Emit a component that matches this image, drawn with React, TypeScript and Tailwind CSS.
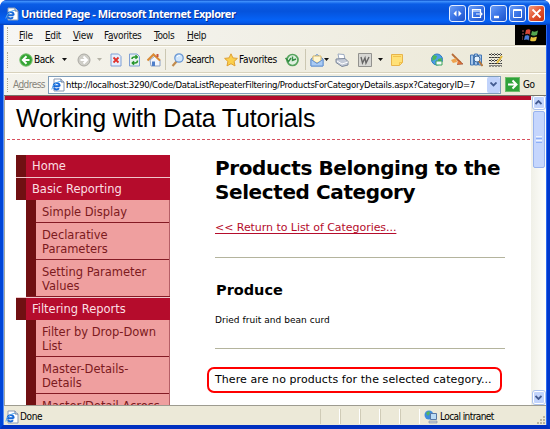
import React from "react";

const tahoma = "font-['DejaVu_Sans_Condensed','DejaVu_Sans',sans-serif] [font-stretch:condensed]";
const verdana = "font-['DejaVu_Sans',sans-serif] [font-stretch:normal]";

function Grip({ h = "h-4" }: { h?: string }) {
  return <span className={`ml-[3px] w-0 shrink-0 border-l border-dotted border-[#a9a691] ${h}`} />;
}

function Caret({ className = "", color = "#111" }: { className?: string; color?: string }) {
  return (
    <svg className={`h-[3px] w-[5px] shrink-0 ${className}`} viewBox="0 0 5 3" fill={color}>
      <path d="M0 0h5L2.5 3z" />
    </svg>
  );
}

function Svg({ className = "", w = 14, children }: { className?: string; w?: number; children: React.ReactNode }) {
  return (
    <svg width={w} height={14} viewBox={`0 0 ${w} 14`} className={`shrink-0 ${className}`} fill="none">
      {children}
    </svg>
  );
}

function IePage({ className = "" }: { className?: string }) {
  return (
    <Svg className={className}>
      <path d="M3 1h7l3 3v9H3z" fill="#fff" stroke="#8b9bb4" />
      <path d="M10 1v3h3" fill="#dbe5f3" stroke="#6b7c98" />
      <path d="M8.7 8.2H2.6a2.7 2.7 0 1 1 6.1 0M3 10a3 3 0 0 0 5 .3" stroke="#1768d8" strokeWidth="1.9" />
      <path d="M.8 11.5C2 7 5 4 9.8 3.3" stroke="#55a7ee" />
    </Svg>
  );
}

function CaptionButton({ className = "", red = false, children }: { className?: string; red?: boolean; children: React.ReactNode }) {
  return (
    <span
      className={`flex h-[17px] w-[17px] shrink-0 items-center justify-center rounded-[3px] border border-[#e4edff] bg-linear-to-br ${red ? "from-[#f19a7c] via-[#e2532f] to-[#c8300c]" : "from-[#6a9cf5] via-[#3a74e6] to-[#1d51c9]"} ${className}`}
    >
      <svg width="13" height="13" viewBox="0 0 13 13" fill="none" stroke="#fff">
        {children}
      </svg>
    </span>
  );
}

function TitleBar() {
  return (
    <div className="flex h-[25px] shrink-0 items-center rounded-t-[6px] bg-[linear-gradient(#0a4cc8_0,#3b8dfa_6%,#0a5de6_16%,#0553dc_45%,#0562f6_80%,#0558e8_92%,#0340b8_100%)] pt-[2px] pl-[5px]">
      <IePage />
      <span className="ml-[2px] w-[216px] font-['Noto_Sans',sans-serif] text-[11px] leading-[16px] font-bold tracking-[-0.46px] whitespace-nowrap text-white [font-stretch:normal] [text-shadow:1px_1px_#0a2c8c]">
        Untitled Page - Microsoft Internet Explorer
      </span>
      <CaptionButton className="ml-auto">
        <path d="M5.5 3.5v6l-3-3zM7.5 3.5v6l3-3z" fill="#fff" stroke="none" />
      </CaptionButton>
      <CaptionButton className="ml-[2px]">
        <path d="M10.5 5V2.5h-8v8h8V9M2.5 4h8M6 7h6M10 5l2 2-2 2" strokeWidth="1.2" />
      </CaptionButton>
      <CaptionButton className="ml-[5px]">
        <path d="M2 10h5" strokeWidth="2.4" />
      </CaptionButton>
      <CaptionButton className="ml-[2px]">
        <path d="M2.5 10.5v-8h8v8zM2.5 3.5h8" />
      </CaptionButton>
      <CaptionButton className="mr-[5px] ml-[2px]" red>
        <path d="M2.5 2.5l8 8M10.5 2.5l-8 8" strokeWidth="1.8" />
      </CaptionButton>
    </div>
  );
}

const menus: [string, string, string, string][] = [
  ["", "F", "ile", "w-[26px]"],
  ["", "E", "dit", "w-[28px]"],
  ["", "V", "iew", "w-[31px]"],
  ["F", "a", "vorites", "w-[50px]"],
  ["", "T", "ools", "w-[33px]"],
  ["", "H", "elp", "w-[30px]"],
];

function MenuBar() {
  return (
    <div className="flex h-[21px] shrink-0 items-stretch border-b border-[#d8d2bd] bg-linear-to-r from-[#f6f6f4] to-[#ece9d8]">
      <div className="flex flex-1 items-center">
        <Grip />
        <div className="ml-[11px] flex pt-px text-[10px] leading-[14px] tracking-[-0.35px] text-[#111]">
          {menus.map(([a, u, b, w]) => (
            <span key={u + b} className={`whitespace-nowrap ${w}`}>
              {a}
              <u className="underline-offset-1">{u}</u>
              {b}
            </span>
          ))}
        </div>
      </div>
      <div className="flex w-[31px] items-center justify-center bg-black">
        <svg width="17" height="15" viewBox="0 0 17 15">
          <path d="M4 2q3-1.600 5 .5L8 7Q6 5 3 6.500z" fill="#d64738" />
          <path d="M10 3q3 1.500 6-.5L15 7q-3 1.600-6 0z" fill="#53a64f" />
          <path d="M3 7.500Q6 6 8 8l-1 4.500Q5 11 2 12z" fill="#4979d4" />
          <path d="M9 8.500q3 1.500 6 0L14 12.500q-3 1.700-6 0z" fill="#e7c33e" />
          <path d="M0 3h2M0 6h2M0 9h1M0 11h1" stroke="#a55" />
          <path d="M9 2L7 13M3 7q3-1 5 1t7 0" stroke="#111" fill="none" />
        </svg>
      </div>
    </div>
  );
}

function Toolbar() {
  return (
    <div className="flex h-[27px] shrink-0 items-center border-t border-b border-t-[#fffef8] border-b-[#d8d2bd] bg-linear-to-r from-[#f4f3ec] to-[#ece9d8] text-[10px]">
      <Grip />
      <Svg className="ml-[11px]">
        <circle cx="7" cy="7" r="6.200" fill="#35a535" stroke="#73bf6a" />
        <path d="M7.500 3.200L3.800 7l3.700 3.800M4 7h6.500" stroke="#fff" strokeWidth="2" />
      </Svg>
      <span className="ml-px w-[28px] tracking-[-0.5px]">Back</span>
      <Caret />
      <Svg className="ml-[10px]">
        <circle cx="7" cy="7" r="6" fill="#cfcec8" stroke="#aaa9a3" />
        <path d="M6.500 3.500L10 7l-3.500 3.500M10 7H3.500" stroke="#fff" strokeWidth="2" />
      </Svg>
      <Caret className="ml-[6px]" color="#b5b3a7" />
      <Svg className="ml-[7px]">
        <path d="M2 1h7.500L12 3.500V13H2z" fill="#e6effd" stroke="#7f9fd4" />
        <path d="M4.500 4.500l5 5M9.500 4.500l-5 5" stroke="#e0302a" strokeWidth="1.800" />
      </Svg>
      <Svg className="ml-[5px]">
        <path d="M1.500 1H9l2.500 2.500V13h-10z" fill="#e6f3ee" stroke="#7f9fd4" />
        <path d="M4 6q0-2 2.500-2H9M7.500 2.300L9.300 4 7.500 5.700M9.500 7.500q0 2.500-2.500 2.500H4.500M6 8.300L4.300 10 6 11.700" stroke="#27962b" strokeWidth="1.500" />
      </Svg>
      <Svg className="ml-[5px]">
        <path d="M3 7l5-4 5 4v6H4z" fill="#f2f5fb" stroke="#8ca0c4" />
        <path d="M.5 7.500L6.500 1.500l6.500 6" stroke="#d98a35" strokeWidth="2" />
        <path d="M9.500 1h2v3h-2z" fill="#c7523c" />
        <path d="M5 8.500h3V13H5z" fill="#4e7fca" />
      </Svg>
      <span className="ml-[4px] h-[21px] w-px bg-[#cbc7b2]" />
      <Svg className="ml-[5px]">
        <path d="M5.500 8.500L1.500 13" stroke="#c18a4b" strokeWidth="2.200" />
        <circle cx="8" cy="5" r="4.200" fill="#cfe5fb" stroke="#6997d3" strokeWidth="1.300" />
        <path d="M6 4q1-1.700 3-1.400" stroke="#fff" />
      </Svg>
      <span className="ml-[1px] w-[37px] tracking-[-0.5px]">Search</span>
      <Svg className="ml-px">
        <path d="M7 .8l1.900 4.100 4.500.5-3.300 3 .9 4.500L7 10.700 3 12.900l.9-4.500-3.300-3 4.500-.5z" fill="#fbd04c" stroke="#dfa032" />
      </Svg>
      <span className="ml-px w-[46px] tracking-[-0.3px]">Favorites</span>
      <Svg>
        <circle cx="7.500" cy="7" r="5.500" fill="#dff0e0" stroke="#56a35d" strokeWidth="1.700" />
        <path d="M7.500 3.500v4L11 6M.5 5l3 3.500L6 5" stroke="#338d42" strokeWidth="1.400" />
      </Svg>
      <span className="ml-[6px] h-[21px] w-px bg-[#cbc7b2]" />
      <Svg className="ml-[4px]">
        <path d="M1 6l6-4.500L13 6v7H1z" fill="#b9d6f7" stroke="#5e8dce" />
        <path d="M3 3h8v5l-4 2-4-2z" fill="#fff6d0" stroke="#dab867" />
        <path d="M1 6.500l6 4 6-4V13H1z" fill="#a9cbf4" stroke="#6795d4" />
      </Svg>
      <Caret />
      <Svg className="ml-[6px]">
        <path d="M3 1l6 .5 1 5-6-.5z" fill="#fff" stroke="#9caac1" />
        <path d="M1 6l9-.5 3 3v3.500l-6 1.500-6-4z" fill="#c3cad7" stroke="#7c879a" />
        <path d="M2 8l5 3 6-2" stroke="#fff" />
      </Svg>
      <Svg className="ml-[9px]">
        <path d="M.5.5h13v13H.5z" fill="#d7d7d3" stroke="#92928e" />
        <path d="M3 4l1.500 6L7 5l1 5 3-6" stroke="#666" strokeWidth="1.400" />
      </Svg>
      <Caret className="ml-[6px]" />
      <Svg className="ml-[7px]">
        <path d="M1.500 1.500h11v8l-3 3h-8z" fill="#ffe177" stroke="#e8b44b" />
        <path d="M12.500 9.500h-3v3M3 3.500h8" stroke="#f2c14c" />
      </Svg>
      <Svg className="ml-[26px]">
        <circle cx="7" cy="6.500" r="5.500" fill="#4c9ee6" stroke="#327ac0" />
        <path d="M3 2l4 1-1 3-4 2zM8 6l4-1-1 5-3 1z" fill="#4db856" />
        <path d="M6 8h6v4H6z" fill="#f5fafc" stroke="#3ca45a" />
      </Svg>
      <Svg className="ml-[6px]">
        <path d="M2 1l9 9" stroke="#b86d38" strokeWidth="1.800" />
        <path d="M1 7l5-2 1 4-4 1z" fill="#efa34d" />
        <path d="M8 7l5 4-6 .5" fill="#e77a38" stroke="#9e4e35" strokeWidth=".7" />
      </Svg>
      <Svg className="ml-[5px]">
        <path d="M1.500 2h3v10h-3zM5.500 1h3v11h-3zM9.500 2h3v10h-3z" fill="#a8c7ea" stroke="#4477b4" />
        <circle cx="8" cy="6" r="3" fill="#e5f3ff" stroke="#426c9c" />
        <path d="M10 8l3.500 5" stroke="#b4783f" strokeWidth="2" />
      </Svg>
      <Svg className="ml-[6px]">
        <path d="M0 1.500h13M0 4.500h13M0 7.500h13M0 10.500h13M0 13h13" stroke="#333" strokeDasharray="2 1" />
        <path d="M2.500 0v14M5.500 0v14M8.500 0v14M11.500 0v14" stroke="#777" strokeDasharray="1 1" />
        <path d="M13 3L8 10" stroke="#e3bb3b" strokeWidth="2" />
      </Svg>
    </div>
  );
}

function AddressBar() {
  return (
    <div className="flex h-[22px] shrink-0 items-center border-t border-t-[#fffef8] bg-linear-to-r from-[#f4f3ec] to-[#ece9d8]">
      <Grip h="h-[14px]" />
      <span className="ml-[5px] w-[35px] text-[10px] tracking-[-0.55px] whitespace-nowrap text-[#86847a]">
        A<u className="underline-offset-1">d</u>dress
      </span>
      <div className="flex h-[18px] w-[453px] shrink-0 items-center border border-[#7f9db9] bg-white">
        <IePage className="ml-[2px]" />
        <span className="ml-[1px] min-w-0 flex-1 text-[9.5px] leading-[14px] tracking-[-0.27px] whitespace-nowrap text-black">
          http://localhost:3290/Code/DataListRepeaterFiltering/ProductsForCategoryDetails.aspx?CategoryID=7
        </span>
        <span className="flex h-[16px] w-[13px] shrink-0 items-center justify-center rounded-[2px] bg-[#c1d3fb]">
          <svg width="7" height="5" viewBox="0 0 7 5" fill="none" stroke="#435b90" strokeWidth="1.800">
            <path d="M.5.5l3 3 3-3" />
          </svg>
        </span>
      </div>
      <span className="ml-[4px] flex h-[15px] w-[15px] shrink-0 items-center justify-center border border-[#6ebd6c] bg-[#2fa23a]">
        <svg width="11" height="11" viewBox="0 0 11 11" fill="none" stroke="#fff" strokeWidth="2">
          <path d="M1 5.500h8M5.500 1.500l4 4-4 4" />
        </svg>
      </span>
      <span className="ml-[3px] text-[10px] tracking-[-0.4px]">Go</span>
    </div>
  );
}

function Section({ children }: { children: React.ReactNode }) {
  return (
    <div className="h-[22px] border-l-[10px] border-l-[#701012] bg-[#b50c2c] pl-[6px] leading-[23px] text-[#fbdfe2]">
      {children}
    </div>
  );
}

function Item({ last = false, children }: { last?: boolean; children: React.ReactNode }) {
  return (
    <div className={`border-[#841a24] px-[6px] pt-[5px] pb-[3px] leading-[14px] ${last ? "" : "border-b"}`}>{children}</div>
  );
}

function SideNav() {
  return (
    <nav className="flex w-[154px] shrink-0 flex-col text-[11.5px] tracking-[-0.02px] whitespace-nowrap">
      <Section>Home</Section>
      <div className="h-px bg-[#f0c6cb]" />
      <Section>Basic Reporting</Section>
      <div className="ml-[10px] border-r border-l-[10px] border-r-[#b65f67] border-l-[#701012] bg-[#ef9f9f] text-[#7c1a20]">
        <Item>Simple Display</Item>
        <Item>
          Declarative
          <br />
          Parameters
        </Item>
        <Item last>
          Setting Parameter
          <br />
          Values
        </Item>
      </div>
      <div className="ml-[10px] h-px bg-[#841a24]" />
      <div className="h-px bg-[#f0c6cb]" />
      <Section>Filtering Reports</Section>
      <div className="ml-[10px] border-r border-l-[10px] border-r-[#b65f67] border-l-[#701012] bg-[#ef9f9f] text-[#7c1a20]">
        <Item>
          Filter by Drop-Down
          <br />
          List
        </Item>
        <Item>
          Master-Details-
          <br />
          Details
        </Item>
        <Item last>Master/Detail Across</Item>
      </div>
    </nav>
  );
}

function Details() {
  return (
    <main className="ml-[45px] flex w-[290px] shrink-0 flex-col whitespace-nowrap text-black">
      <h1 className="mt-[1px] text-[20px] leading-[24px] font-bold tracking-[-0.4px]">
        Products Belonging to the
        <br />
        Selected Category
      </h1>
      <a className="mt-[17px] text-[11px] leading-[14px] tracking-[-0.05px] text-[#b50c2c] underline underline-offset-2">
        &lt;&lt; Return to List of Categories...
      </a>
      <div className="mt-[22px] h-px bg-[#b4b49d]" />
      <h2 className="mt-[22px] pl-px text-[14.5px] leading-[20px] font-bold">Produce</h2>
      <p className="mt-[14px] text-[9px] leading-[12px] tracking-[0.04px]">Dried fruit and bean curd</p>
      <div className="mt-[22px] h-px bg-[#b4b49d]" />
      <div className="mt-[18px] -ml-[8px] flex h-[26px] w-[295px] items-center rounded-[7px] border-2 border-[#ff0000] pl-[6px] text-[11px] tracking-[0.08px]">
        There are no products for the selected category...
      </div>
    </main>
  );
}

function ScrollBar() {
  return (
    <div className="flex w-[15px] shrink-0 flex-col items-center bg-linear-to-r from-[#f0f0e8] to-[#fefefb]">
      <span className="flex h-[13px] w-[12px] shrink-0 items-center justify-center rounded-[2px] border border-white bg-[#c2d4fc] outline outline-[#adc3ef]">
        <svg width="7" height="5" viewBox="0 0 7 5" fill="none" stroke="#435b90" strokeWidth="1.800">
          <path d="M.5 4l3-3 3 3" />
        </svg>
      </span>
      <span className="mt-[2px] flex h-[57px] w-[12px] flex-col items-center justify-center gap-px rounded-[2px] border border-[#98b3ee] bg-[#c5d6fd]">
        <i className="h-px w-[6px] bg-[#edf4ff]" />
        <i className="h-px w-[6px] bg-[#8cb0f8]" />
        <i className="h-px w-[6px] bg-[#edf4ff]" />
        <i className="h-px w-[6px] bg-[#8cb0f8]" />
      </span>
      <span className="mt-auto mb-px flex h-[13px] w-[12px] items-center justify-center rounded-[2px] border border-white bg-[#c2d4fc] outline outline-[#adc3ef]">
        <svg width="7" height="5" viewBox="0 0 7 5" fill="none" stroke="#435b90" strokeWidth="1.800">
          <path d="M.5 1l3 3 3-3" />
        </svg>
      </span>
    </div>
  );
}

function StatusBar() {
  return (
    <div className="flex h-[20px] shrink-0 items-center border-t border-[#9d9b90] bg-[#ece9d8] pt-[2px] text-[10px]">
      <IePage className="ml-px" />
      <span className="ml-px w-[300px] tracking-[-0.35px]">Done</span>
      {[0, 1, 2, 3, 4].map((n) => (
        <span key={n} className="h-[15px] w-[20px] shrink-0 border-r border-l border-r-white border-l-[#cfcbb7]" />
      ))}
      <Svg className="ml-[4px]">
        <circle cx="5" cy="5" r="4.500" fill="#3c8cdc" />
        <path d="M2 3l3-2 1 2-2 3z" fill="#55b65c" />
        <path d="M6.500 3.500h6v6h-6z" fill="#b9dbf6" stroke="#5777a5" />
        <path d="M5 11h8v2H5z" fill="#c8ced8" stroke="#7888a1" strokeWidth=".6" />
      </Svg>
      <span className="ml-[2px] tracking-[-0.58px] whitespace-nowrap">Local intranet</span>
      <svg className="mt-auto ml-auto" width="10" height="10" viewBox="0 0 10 10" fill="#b8b49f">
        <path d="M7 1h2v2H7zM4 4h2v2H4zM7 4h2v2H7zM1 7h2v2H1zM4 7h2v2H4zM7 7h2v2H7z" />
      </svg>
    </div>
  );
}

export default function App() {
  return (
    <div className={`flex h-[429px] w-[550px] flex-col overflow-hidden rounded-t-[7px] bg-[#0831d9] ${tahoma}`}>
      <TitleBar />
      <div className="flex min-h-0 flex-1 flex-col border-r-[3px] border-b-[4px] border-l-[3px] border-r-[#0038cc] border-b-[#0030c0] border-l-[#0045d8]">
        <div className="flex min-h-0 flex-1 flex-col border-r border-l border-r-[#2b6af0] border-l-[#5a90f4]">
          <MenuBar />
          <Toolbar />
          <AddressBar />
          <div className="h-px shrink-0 bg-[#77756a]" />
          <div className={`flex h-[309px] shrink-0 overflow-hidden border-l border-[#aaa89c] bg-white ${verdana}`}>
            <div className="flex min-w-0 flex-1 flex-col overflow-hidden">
              <div className="h-[4px] shrink-0 bg-[#b50c2c]" />
              <div className="ml-[11px] h-[39px] shrink-0 font-['Liberation_Sans',sans-serif] text-[25px] leading-[37px] tracking-[-0.17px] whitespace-nowrap text-black">
                Working with Data Tutorials
              </div>
              <svg className="ml-[2px] h-px w-[525px] shrink-0" viewBox="0 0 525 1">
                <path d="M0 .5h525" stroke="#d8505f" strokeDasharray="3 2" />
              </svg>
              <div className="ml-[11px] flex items-start pt-[15px]">
                <SideNav />
                <Details />
              </div>
            </div>
            <ScrollBar />
          </div>
          <StatusBar />
        </div>
      </div>
    </div>
  );
}
